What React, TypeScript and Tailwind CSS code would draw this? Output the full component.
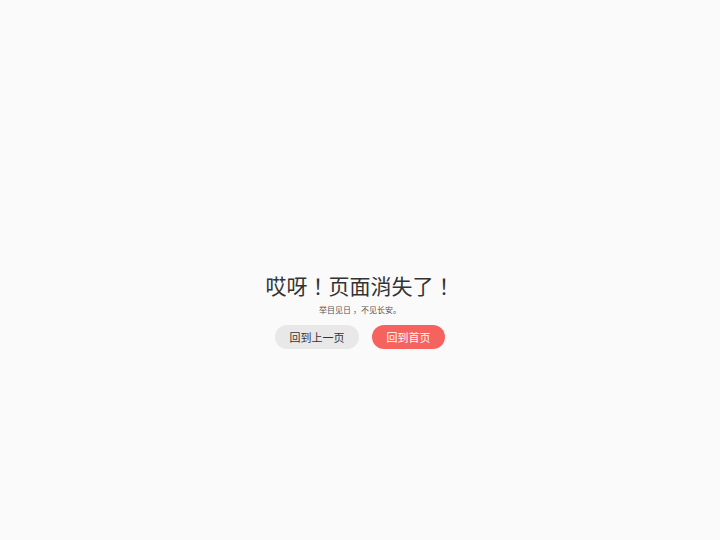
export default function App() {
    return (
        <div
            className="flex h-[540px] w-full flex-col items-center bg-[#fafafa] pt-[272px]"
            style={{ fontFamily: '"Noto Sans CJK TC", "Noto Sans", sans-serif' }}
        >
            <h1 className="text-[21px] leading-[26px] text-[#333]">
                哎呀！页面消失了！
            </h1>
            <p
                className="mt-[6px] text-[8px] leading-[12px] text-[#555]"
                style={{ fontFamily: '"Noto Sans CJK SC", sans-serif' }}
            >
                举目见日 ，不见长安。
            </p>
            <div className="mt-[9px] flex gap-[13px]">
                <button className="h-[24px] w-[84px] rounded-full bg-[#e8e8e8] text-[11px] text-[#333]">
                    回到上一页
                </button>
                <button className="h-[24px] w-[73px] rounded-full bg-[#f6625e] text-[11px] text-white">
                    回到首页
                </button>
            </div>
        </div>
    );
}
